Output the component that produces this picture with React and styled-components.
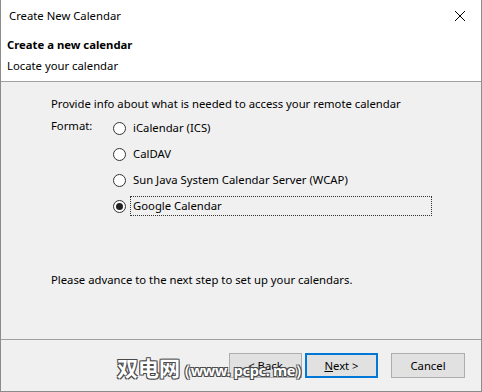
import React from "react";
import styled, { createGlobalStyle } from "styled-components";

const GlobalStyle = createGlobalStyle`
	html, body {
		margin: 0;
		padding: 0;
		background: #ffffff;
	}
	body {
		font-family: "Noto Sans", "Open Sans", sans-serif;
		font-size: 11.3px;
		color: #000;
	}
`;

const formats = [
	{ id: "ics", label: "iCalendar (ICS)" },
	{ id: "caldav", label: "CalDAV" },
	{ id: "wcap", label: "Sun Java System Calendar Server (WCAP)" },
	{ id: "google", label: "Google Calendar" },
];

const App = () => {
	const selected = "google";
	return (
		<>
			<GlobalStyle />
			<StyledWindow>
				<StyledTitleBar>
					<span>Create New Calendar</span>
					<StyledClose>
						<svg width="12" height="12" viewBox="0 0 12 12">
							<path d="M1 1 L11 11 M11 1 L1 11" stroke="#000" strokeWidth="1" fill="none" />
						</svg>
					</StyledClose>
				</StyledTitleBar>
				<StyledHeader>
					<StyledHeading>Create a new calendar</StyledHeading>
					<StyledSubheading>Locate your calendar</StyledSubheading>
				</StyledHeader>
				<StyledBody>
					<StyledText>Provide info about what is needed to access your remote calendar</StyledText>
					<StyledFormatRow>
						<StyledFormatLabel>Format:</StyledFormatLabel>
						<StyledOptions>
							{formats.map((f) => (
								<StyledOption key={f.id}>
									<StyledRadio $checked={f.id === selected} />
									<StyledOptionText $focused={f.id === selected}>{f.label}</StyledOptionText>
								</StyledOption>
							))}
						</StyledOptions>
					</StyledFormatRow>
					<StyledNote>Please advance to the next step to set up your calendars.</StyledNote>
				</StyledBody>
				<StyledFooter>
					<StyledButton>&lt; Back</StyledButton>
					<StyledButton $primary>
						<u>N</u>ext &gt;
					</StyledButton>
					<StyledButton $gap>Cancel</StyledButton>
				</StyledFooter>
				<StyledWatermark>
					双电网<StyledWatermarkLatin>（www. pcpc. me）</StyledWatermarkLatin>
				</StyledWatermark>
			</StyledWindow>
		</>
	);
};

const StyledWindow = styled.div`
	position: relative;
	width: 482px;
	height: 392px;
	box-sizing: border-box;
	border: 1px solid #8c8c8c;
	border-top: none;
	background: #f0f0f0;
	display: flex;
	flex-direction: column;
	overflow: hidden;
`;

const StyledTitleBar = styled.div`
	height: 30px;
	background: #ffffff;
	display: flex;
	align-items: center;
	justify-content: space-between;
	padding: 1px 0 0 8px;
	box-sizing: border-box;
`;

const StyledClose = styled.div`
	width: 30px;
	display: flex;
	justify-content: center;
	margin-right: 6px;
`;

const StyledHeader = styled.div`
	height: 45px;
	background: #ffffff;
	border-bottom: 1px solid #a0a0a0;
	padding: 6px 0 0 6px;
`;

const StyledHeading = styled.div`
	font-weight: bold;
	line-height: 18px;
`;

const StyledSubheading = styled.div`
	line-height: 18px;
	margin-top: 3px;
`;

const StyledBody = styled.div`
	flex: 1;
	padding: 13px 0 0 50px;
`;

const StyledText = styled.div`
	line-height: 18px;
`;

const StyledFormatRow = styled.div`
	display: flex;
	margin-top: 4px;
`;

const StyledFormatLabel = styled.div`
	width: 62px;
	line-height: 18px;
`;

const StyledOptions = styled.div`
	display: flex;
	flex-direction: column;
	gap: 6px;
	padding-top: 1px;
`;

const StyledOption = styled.div`
	display: flex;
	align-items: center;
	height: 20px;
`;

const StyledRadio = styled.span`
	width: 11px;
	height: 11px;
	border: 1px solid #333;
	border-radius: 50%;
	background: #fff;
	margin-right: 5px;
	position: relative;
	&::after {
		content: "";
		display: ${(p) => (p.$checked ? "block" : "none")};
		position: absolute;
		left: 2px;
		top: 2px;
		width: 7px;
		height: 7px;
		border-radius: 50%;
		background: #222;
	}
`;

const StyledOptionText = styled.span`
	line-height: 18px;
	padding: 0 2px;
	outline: ${(p) => (p.$focused ? "1px dotted #333" : "none")};
	width: ${(p) => (p.$focused ? "296px" : "auto")};
`;

const StyledNote = styled.div`
	margin-top: 55px;
	line-height: 18px;
`;

const StyledFooter = styled.div`
	height: 52px;
	border-top: 1px solid #a0a0a0;
	display: flex;
	justify-content: flex-end;
	align-items: flex-start;
	padding: 13px 16px 0 0;
	box-sizing: border-box;
	gap: 3px;
`;

const StyledButton = styled.button`
	width: ${(p) => (p.$gap ? "74px" : "73px")};
	height: 25px;
	box-sizing: border-box;
	font: inherit;
	background: #e1e1e1;
	border: ${(p) => (p.$primary ? "2px solid #0078d7" : "1px solid #adadad")};
	margin-left: ${(p) => (p.$gap ? "10px" : "0")};
	color: #000;
	padding: 0;
`;

const StyledWatermark = styled.div`
	position: absolute;
	left: 116px;
	top: 353px;
	font-family: "Noto Sans CJK SC", "Noto Sans", sans-serif;
	font-size: 21px;
	font-weight: bold;
	line-height: 28px;
	color: #ffffff;
	white-space: nowrap;
	text-shadow: -1px -1px 0 #4a4a4a, 1px -1px 0 #4a4a4a, -1px 1px 0 #4a4a4a, 1px 1px 0 #4a4a4a;
	pointer-events: none;
`;

const StyledWatermarkLatin = styled.span`
	font-family: "Noto Sans", sans-serif;
	font-size: 14.5px;
	letter-spacing: -0.3px;
	margin-left: -4px;
`;

export default App;
